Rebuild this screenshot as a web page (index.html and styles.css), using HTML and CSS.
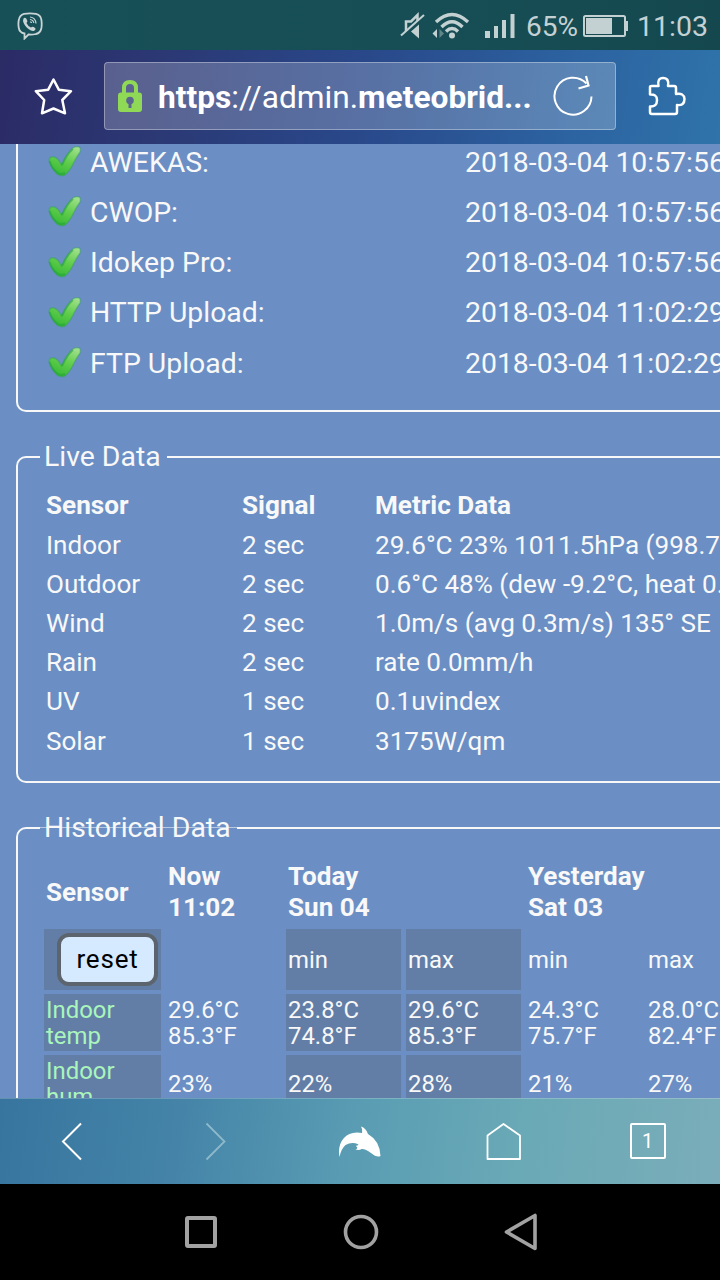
FILE: index.html
```html
<!DOCTYPE html>
<html lang="en">
<head>
    <meta charset="UTF-8">
    <meta name="viewport" content="width=device-width, initial-scale=1.0">
    <title>Meteobridge</title>
    <link rel="stylesheet" href="styles.css">
</head>
<body>
    <svg class="defs" width="0" height="0">
        <defs>
            <linearGradient id="green" x1="0.8" y1="0" x2="0.35" y2="1">
                <stop offset="0" stop-color="#a2e08e"/>
                <stop offset="0.5" stop-color="#62cd4c"/>
                <stop offset="1" stop-color="#36b936"/>
            </linearGradient>
            <symbol id="check" viewBox="0 0 36 34">
                <path d="M2 15 Q3 11 7 12 Q11 13 14.500 20 Q20 8 26 3 Q29 1 32 2 Q34 3 33 7 Q30 11 27 17 Q23 26 18 30 Q14 32 10 29 Q4 23 2 15 Z" fill="url(#green)" stroke="#2c9d51" stroke-opacity="0.35" stroke-width="1.500"/>
                <path d="M2.500 16 Q5 24 11 28 Q14 30 18 28 M15 20 Q20 9 26 4" fill="none" stroke="#1fa03c" stroke-opacity="0.5" stroke-width="2"/>
            </symbol>
        </defs>
    </svg>

    <div class="status">
        <svg class="viber" width="26" height="28" viewBox="0 0 26 28">
            <path d="M7 1.800 Q13 0.800 19 1.800 Q24 3 24.400 8 Q25 12 24.400 16 Q23.500 21 19 22 Q15 23 11.500 22.500 L7.500 26.500 V21.500 Q2.500 20.500 1.800 16 Q1 12 1.800 8 Q2.500 3 7 1.800 Z" fill="none" stroke="#c8d4d6" stroke-width="1.800"/>
            <path d="M6.500 6.500 Q8.500 4.500 10 8 Q11 9.500 9.500 11 Q11 14.500 14 15.500 Q15.500 14 17.500 15.500 Q19.500 16.700 17.500 18.500 Q15.500 20 11.500 17 Q7 13.500 6 9 Z" fill="#c8d4d6"/>
            <path d="M13 5 Q18.500 5.500 19 11.500 M13 7.500 Q16.500 8 16.800 11 M13.200 9.800 Q14.500 9.800 14.600 11" fill="none" stroke="#c8d4d6" stroke-width="1.200"/>
        </svg>
        <svg class="mute" width="26" height="28" viewBox="0 0 26 28">
            <path d="M6 19 V9.500 H11 L17.500 3 V9" fill="none" stroke="#c4d1d3" stroke-width="2.500"/>
            <path d="M11 19.500 L19 12.500 V26.500 Z" fill="#c4d1d3"/>
            <path d="M1 23.500 L24 3" stroke="#c4d1d3" stroke-width="2"/>
        </svg>
        <svg class="wifi" width="38" height="28" viewBox="0 0 38 28">
            <path d="M4 10 Q20 -5 36 10 M9.500 15 Q20 4.500 30.500 15 M14 19.500 Q20 13.500 26 19.500" fill="none" stroke="#c4d1d3" stroke-width="3.300"/>
            <circle cx="20" cy="23.500" r="3" fill="#c4d1d3"/>
            <path d="M5 17 V26 L0.500 21.500 Z" fill="#c4d1d3"/>
            <path d="M7.500 17 V26 L12 21.500 Z" fill="#61858a"/>
        </svg>
        <svg class="signal" width="30" height="26" viewBox="0 0 30 26">
            <path d="M0 18 h5 v7 h-5 z M9 13 h4 v12 h-4 z M17 7 h4 v18 h-4 z M25.500 1 h4 v24 h-4 z" fill="#c4d1d3"/>
        </svg>
        <span class="percent">65%</span>
        <svg class="battery" width="46" height="24" viewBox="0 0 46 24">
            <rect x="1" y="2" width="41" height="20" rx="1.500" fill="none" stroke="#c4d1d3" stroke-width="2"/>
            <path d="M3 4 h26 v16 h-26 z M43 7 h2 v10 h-2 z" fill="#c4d1d3"/>
        </svg>
        <span class="clock">11:03</span>
    </div>

    <div class="toolbar">
        <div class="tool">
            <svg width="42" height="42" viewBox="0 0 42 42">
                <path d="M22.500 3.500 L27.800 13.700 L40 15.200 L31.300 24 L34 37.300 L22.500 32.500 L11 37.300 L13.200 24 L4.800 15.200 L17.200 13.700 Z" fill="none" stroke="#fff" stroke-width="2.500" stroke-linejoin="round"/>
            </svg>
        </div>
        <div class="address">
            <svg class="lock" width="24" height="32" viewBox="0 0 24 32">
                <path d="M6 14 V8 Q6 2 12 2 Q18 2 18 8 V14" fill="none" stroke="#90d956" stroke-width="4"/>
                <rect y="12.500" width="24" height="19.500" rx="3" fill="#90d956"/>
                <circle cx="12" cy="20.500" r="3.800" fill="#5b6690"/>
                <path d="M10.500 22 h3 v6 h-3 z" fill="#5b6690"/>
            </svg>
            <div class="url"><b>https</b>://admin.<b>meteobrid...</b></div>
            <svg class="reload" width="42" height="42" viewBox="0 0 42 42">
                <path d="M39.500 21.500 A18.500 18.500 0 1 1 34.500 8.500" fill="none" stroke="#fff" stroke-width="2"/>
                <path d="M34 1 L36.500 10.500 L26.500 13.500" fill="none" stroke="#fff" stroke-width="2.200"/>
            </svg>
        </div>
        <div class="tool">
            <svg width="42" height="42" viewBox="0 0 42 42">
                <path d="M3 11 Q3 10 5 10 H11.500 Q10 2 16 2 Q22.500 2 21 10 H27 Q29 10 29 12 V18 Q37 16.500 37.500 23 Q37.500 30 30 29 V36 Q30 38 28 38 H5 Q3 38 3 36 V30.500 Q10 31 10 24 Q10 18 3 18.500 Z" fill="none" stroke="#fff" stroke-width="2.500" stroke-linejoin="round"/>
            </svg>
        </div>
    </div>

    <div class="page">
        <div class="uploads">
            <div class="upload"><svg class="check"><use href="#check"/></svg><span class="service">AWEKAS:</span><span>2018-03-04 10:57:56</span></div>
            <div class="upload"><svg class="check"><use href="#check"/></svg><span class="service">CWOP:</span><span>2018-03-04 10:57:56</span></div>
            <div class="upload"><svg class="check"><use href="#check"/></svg><span class="service">Idokep Pro:</span><span>2018-03-04 10:57:56</span></div>
            <div class="upload"><svg class="check"><use href="#check"/></svg><span class="service">HTTP Upload:</span><span>2018-03-04 11:02:29</span></div>
            <div class="upload"><svg class="check"><use href="#check"/></svg><span class="service">FTP Upload:</span><span>2018-03-04 11:02:29</span></div>
        </div>

        <fieldset class="live">
            <legend>Live Data</legend>
            <table class="live-table">
                <tr><th class="sensor">Sensor</th><th class="age">Signal</th><th>Metric Data</th></tr>
                <tr><td>Indoor</td><td>2 sec</td><td>29.6°C 23% 1011.5hPa (998.7</td></tr>
                <tr><td>Outdoor</td><td>2 sec</td><td>0.6°C 48% (dew -9.2°C, heat 0.</td></tr>
                <tr><td>Wind</td><td>2 sec</td><td>1.0m/s (avg 0.3m/s) 135° SE</td></tr>
                <tr><td>Rain</td><td>2 sec</td><td>rate 0.0mm/h</td></tr>
                <tr><td>UV</td><td>1 sec</td><td>0.1uvindex</td></tr>
                <tr><td>Solar</td><td>1 sec</td><td>3175W/qm</td></tr>
            </table>
        </fieldset>

        <fieldset class="history">
            <legend>Historical Data</legend>
            <table class="history-table">
                <colgroup><col class="first"><col><col><col><col><col></colgroup>
                <tr class="head"><th>Sensor</th><th>Now<br>11:02</th><th colspan="2">Today<br>Sun 04</th><th colspan="2">Yesterday<br>Sat 03</th></tr>
                <tr class="minmax"><td class="dark"><button class="reset">reset</button></td><td></td><td class="dark">min</td><td class="dark">max</td><td>min</td><td>max</td></tr>
                <tr><td class="dark name">Indoor<br>temp</td><td>29.6°C<br>85.3°F</td><td class="dark">23.8°C<br>74.8°F</td><td class="dark">29.6°C<br>85.3°F</td><td>24.3°C<br>75.7°F</td><td>28.0°C<br>82.4°F</td></tr>
                <tr><td class="dark name">Indoor<br>hum</td><td>23%</td><td class="dark">22%</td><td class="dark">28%</td><td>21%</td><td>27%</td></tr>
            </table>
        </fieldset>
    </div>

    <div class="navbar">
        <div><svg width="44" height="44" viewBox="0 0 44 44"><path d="M31 4.500 L13 22.500 L31 40.500" fill="none" stroke="#fff" stroke-width="2"/></svg></div>
        <div><svg width="44" height="44" viewBox="0 0 44 44"><path d="M12.500 4.500 L30.500 22.500 L12.500 40.500" fill="none" stroke="#8db9cb" stroke-width="1.800"/></svg></div>
        <div><svg width="44" height="44" viewBox="0 0 44 44"><path d="M1.500 38 C-1 25 6 13.500 19 13.500 Q21.500 13.500 24 14 Q24.500 10 23 7.500 Q28 9 30 15 Q42 22 42.500 37 Q39 39 33 34 Q27 29.500 23.500 30 Q21.500 31.500 17.500 30.500 Q20 29.500 19 28 Q18 27.500 18 26.500 Q20 27 20.500 25.500 Q14 22.500 7.500 26 Q3 30 1.500 38 Z" fill="#fff"/></svg></div>
        <div><svg width="44" height="44" viewBox="0 0 44 44"><path d="M5.500 40 V16.500 L21.500 5 L38 16.500 V40 Z" fill="none" stroke="#fff" stroke-width="1.800" stroke-linejoin="round"/></svg></div>
        <div><span class="tabs">1</span></div>
    </div>

    <div class="system">
        <div><svg width="40" height="40" viewBox="0 0 40 40"><rect x="7" y="6" width="28" height="28" rx="1" fill="none" stroke="#a2a2a2" stroke-width="4"/></svg></div>
        <div><svg width="40" height="40" viewBox="0 0 40 40"><circle cx="21" cy="20" r="15.500" fill="none" stroke="#a2a2a2" stroke-width="3.600"/></svg></div>
        <div><svg width="40" height="40" viewBox="0 0 40 40"><path d="M35 3.500 V36.500 L6.500 20 Z" fill="none" stroke="#a2a2a2" stroke-width="3.600" stroke-linejoin="round"/></svg></div>
    </div>
</body>
</html>
```
FILE: styles.css
```css
* {
    box-sizing: border-box;
}

body {
    margin: 0;
    width: 720px;
    height: 1280px;
    display: flex;
    flex-direction: column;
    overflow: hidden;
    font-family: Roboto, sans-serif;
    color: #f8f8f8;
    background: #000;
}

svg {
    display: block;
    flex: none;
}

/* status bar */
.status {
    flex: none;
    height: 50px;
    padding: 2px 12px 0 17px;
    display: flex;
    align-items: center;
    background: linear-gradient(90deg, #185058, #174e55 60%, #14484e);
    color: #c4d1d3;
    font-size: 28.5px;
}

.viber {
    margin-right: auto;
}

.wifi {
    margin-left: 6px;
}

.signal {
    margin: 0 11px 0 15px;
}

.percent {
    width: 52px;
    font-size: 28px;
}

.battery {
    margin: 0 8px 0 5px;
}

/* address bar */
.toolbar {
    flex: none;
    height: 94px;
    display: flex;
    align-items: center;
    background: linear-gradient(98deg, #2b2b66 0%, #2b3874 22%, #29488a 50%, #2c62a0 78%, #2f73aa 100%);
}

.tool {
    width: 104px;
    display: flex;
    justify-content: center;
}

.address {
    width: 512px;
    height: 68px;
    margin-top: -2px;
    padding: 0 21px 0 13px;
    display: flex;
    align-items: center;
    border: 1px solid rgba(255, 255, 255, 0.35);
    border-radius: 4px;
    background: rgba(255, 255, 255, 0.22);
}

.url {
    margin-left: 16px;
    padding-top: 2px;
    font-size: 31.7px;
    color: #fff;
    white-space: nowrap;
}

.reload {
    margin-left: auto;
}

/* web page */
.page {
    flex: 1;
    min-height: 0;
    padding-left: 16px;
    overflow: hidden;
    background: #6b8fc4;
    white-space: nowrap;
}

.uploads {
    width: 760px;
    height: 275px;
    margin-top: -7px;
    border: 2px solid #f8f8f8;
    border-top: none;
    border-radius: 0 0 10px 10px;
    font-size: 28.4px;
}

.upload {
    height: 50.25px;
    padding-left: 29px;
    display: flex;
    align-items: center;
}

.check {
    width: 36px;
    height: 34px;
    margin-right: 7px;
}

.service {
    width: 375px;
}

fieldset {
    width: 760px;
    min-width: 0;
    margin: 28px 0 0;
    border: 2px solid #f8f8f8;
    border-radius: 10px;
}

legend {
    padding: 0 6px 0 4px;
    font-size: 28.4px;
    line-height: 34px;
}

.live {
    height: 343px;
    padding: 11px 22px 0;
}

.live-table {
    width: 700px;
    table-layout: fixed;
    border-spacing: 0;
    font-size: 26.1px;
    text-align: left;
}

.live-table th {
    height: 40px;
}

.live-table td {
    height: 39.2px;
}

.live-table th,
.live-table td {
    padding: 0 0 0 6px;
}

.sensor {
    width: 196px;
}

.age {
    width: 133px;
}

.history {
    height: 600px;
    padding: 10px 21px 0;
}

.history legend {
    margin-left: 1px;
    background: linear-gradient(#b9c9e2, #b9c9e2) 0 16px / 100% 1px no-repeat;
}

.history-table {
    width: 727px;
    table-layout: fixed;
    border-spacing: 5px 4px;
    font-size: 23.9px;
    line-height: 26px;
    text-align: left;
}

.history-table col {
    width: 115px;
}

.history-table .first {
    width: 117px;
}

.history-table th,
.history-table td {
    height: 57px;
    padding: 0 2px;
}

.history-table .head th {
    height: 66px;
    font-size: 26.1px;
    line-height: 31px;
}

.history-table .minmax td {
    height: 61px;
}

.dark {
    background: #637ea6;
}

.history-table .name {
    color: #a9f5bc;
}

.reset {
    display: block;
    width: 101px;
    height: 53px;
    margin-left: 11px;
    padding: 0 0 2px;
    border: 4px solid #5c646e;
    border-radius: 12px;
    background: #d6eaff;
    font-family: Roboto, sans-serif;
    font-size: 26px;
    letter-spacing: 0.8px;
    color: #000;
}

/* browser buttons */
.navbar {
    flex: none;
    height: 86px;
    padding-bottom: 2px;
    display: grid;
    grid-template-columns: repeat(5, 144px);
    align-items: center;
    justify-items: center;
    border-top: 1px solid rgba(255, 255, 255, 0.2);
    background: linear-gradient(98deg, #37759f 0%, #4584a8 25%, #5a9db3 50%, #6aa9b6 72%, #7aadb9 100%);
}

.tabs {
    display: flex;
    width: 36px;
    height: 36px;
    margin-right: 1px;
    align-items: center;
    justify-content: center;
    border: 2px solid #fff;
    border-radius: 2px;
    color: #fff;
    font-size: 20px;
}

/* android keys */
.system {
    flex: none;
    height: 96px;
    padding: 0 120px;
    display: grid;
    grid-template-columns: repeat(3, 160px);
    align-items: center;
    justify-items: center;
    background: #000;
}
```
